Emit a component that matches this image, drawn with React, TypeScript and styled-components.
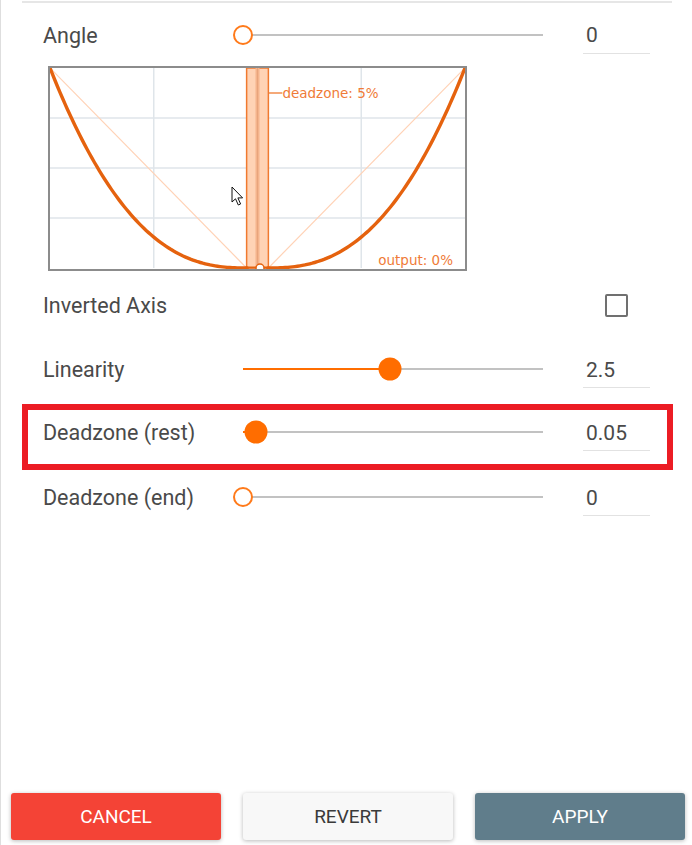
import React from 'react';
import styled, { createGlobalStyle, css } from 'styled-components';

const GlobalStyle = createGlobalStyle`
  html, body {
    margin: 0;
    padding: 0;
    background: #ffffff;
  }
  body {
    font-family: Roboto, "Noto Sans", "Liberation Sans", sans-serif;
    color: #424242;
  }
  * {
    box-sizing: border-box;
  }
`;

const ORANGE = '#ff6d00';
const CURVE = '#e5620e';
const LABEL_ORANGE = '#ef7b38';

const Panel = styled.div`
  width: 692px;
  height: 845px;
  border-left: 1px solid #dedede;
  display: flex;
  flex-direction: column;
`;

const TopRule = styled.div`
  margin: 1px 0 0 21px;
  width: 650px;
  border-top: 2px solid #e6e6e6;
`;

const Row = styled.div<{ height: number; inset?: number }>`
  height: ${p => p.height}px;
  padding-left: ${p => p.inset ?? 42}px;
  display: flex;
  align-items: center;
`;

const Label = styled.div`
  width: 200px;
  font-size: 21.5px;
  line-height: 26px;
  color: #4a4a4a;
  padding-top: 2px;
`;

const SliderBox = styled.div`
  position: relative;
  width: 300px;
  height: 24px;
`;

const Track = styled.div`
  position: absolute;
  left: 0;
  right: 0;
  top: 11px;
  height: 2px;
  background: #c2c2c2;
`;

const TrackFill = styled.div`
  position: absolute;
  left: 0;
  top: 11px;
  height: 2px;
  background: ${ORANGE};
`;

const Thumb = styled.div<{ hollow?: boolean }>`
  position: absolute;
  top: 50%;
  border-radius: 50%;
  transform: translate(-50%, -50%);
  ${p =>
    p.hollow
      ? css`
          width: 20px;
          height: 20px;
          background: #fff;
          border: 2px solid #ff7a1a;
        `
      : css`
          width: 23px;
          height: 23px;
          background: ${ORANGE};
        `}
`;

const ValueField = styled.div`
  margin-left: 40px;
  width: 67px;
  height: 38px;
  padding: 2px 0 0 3px;
  display: flex;
  align-items: center;
  font-size: 21px;
  color: #4a4a4a;
  border-bottom: 1px solid #e2e2e2;
`;

const ChartFrame = styled.div`
  margin-left: 47px;
  width: 419px;
  height: 205px;
  border: 2px solid #8c8c8c;
  background: #fff;
`;

const Checkbox = styled.div`
  margin-left: auto;
  margin-right: 64px;
  width: 23px;
  height: 23px;
  border: 2.5px solid #707070;
  border-radius: 2px;
`;

const Highlight = styled.div`
  margin: 5px 0 0 21px;
  width: 651px;
  height: 66px;
  border: 6px solid #ec1c24;
  padding-bottom: 10px;
`;

const Spacer = styled.div`
  flex: 1;
`;

const Footer = styled.div`
  display: flex;
  gap: 22px;
  padding: 0 0 5px 10px;
`;

type Variant = 'cancel' | 'revert' | 'apply';

const variantStyles: Record<Variant, ReturnType<typeof css>> = {
  cancel: css`
    background: #f44336;
    color: #ffffff;
  `,
  revert: css`
    background: #f8f8f8;
    color: #3a3a3a;
  `,
  apply: css`
    background: #607d8b;
    color: #ffffff;
  `,
};

const ActionButton = styled.button<{ variant: Variant }>`
  width: 210px;
  height: 47px;
  border: none;
  border-radius: 3px;
  font-family: Roboto, "Liberation Sans", sans-serif;
  font-size: 19px;
  font-weight: 400;
  box-shadow: 0 1px 4px rgba(0, 0, 0, 0.28);
  cursor: pointer;
  ${p => variantStyles[p.variant]}
`;

interface SliderProps {
  percent: number;
  hollow?: boolean;
}

const Slider: React.FC<SliderProps> = ({ percent, hollow }) => (
  <SliderBox>
    <Track />
    {percent > 0 && <TrackFill style={{ width: `${percent}%` }} />}
    <Thumb hollow={hollow} style={{ left: `${percent}%` }} />
  </SliderBox>
);

const W = 415;
const H = 200;
const DZ = 0.05;
const LIN = 2.5;
const CHART_FONT = "'DejaVu Sans', Verdana, sans-serif";

function curvePath(side: -1 | 1): string {
  const cx = W / 2;
  const pts: string[] = [];
  for (let i = 0; i <= 80; i++) {
    const u = DZ + ((1 - DZ) * i) / 80;
    const out = Math.pow((u - DZ) / (1 - DZ), LIN);
    const x = cx + side * u * cx;
    const y = H - out * H;
    pts.push(`${x.toFixed(2)},${y.toFixed(2)}`);
  }
  return 'M' + pts.join(' L');
}

const ResponseChart: React.FC = () => {
  const cx = W / 2;
  const half = DZ * cx * 2;
  const bandL = cx - half / 2 - 0.5;
  const bandR = cx + half / 2 + 0.5;
  return (
    <ChartFrame>
      <svg width={W} height={H + 1} viewBox={`0 0 ${W} ${H + 1}`} style={{ display: 'block' }}>
        {[1, 3].map(i => (
          <line key={`v${i}`} x1={(W / 4) * i} y1={0} x2={(W / 4) * i} y2={H} stroke="#dfe5ea" strokeWidth={1.5} />
        ))}
        {[1, 2, 3].map(i => (
          <line key={`h${i}`} x1={0} y1={(H / 4) * i} x2={W} y2={(H / 4) * i} stroke="#dfe5ea" strokeWidth={1.5} />
        ))}
        <line x1={0} y1={0} x2={bandL} y2={H} stroke="#ffd2b6" strokeWidth={1.2} />
        <line x1={bandR} y1={H} x2={W} y2={0} stroke="#ffd2b6" strokeWidth={1.2} />
        <rect x={bandL} y={0} width={bandR - bandL} height={H} fill="#ffd3b5" stroke="#f07a30" strokeWidth={1.5} />
        <rect x={cx - 2} y={0} width={4} height={H} fill="#f5b48c" />
        <line x1={cx} y1={0} x2={cx} y2={H} stroke="#e8a47c" strokeWidth={1} />
        <line x1={bandR} y1={25} x2={bandR + 14} y2={25} stroke="#f07a30" strokeWidth={1.3} />
        <text x={bandR + 14} y={30} fontFamily={CHART_FONT} fontSize={13.5} fill={LABEL_ORANGE}>
          deadzone: 5%
        </text>
        <text x={W - 12} y={197} textAnchor="end" fontFamily={CHART_FONT} fontSize={13.5} fill={LABEL_ORANGE}>
          output: 0%
        </text>
        <path d={curvePath(-1)} fill="none" stroke={CURVE} strokeWidth={3.4} strokeLinecap="round" />
        <path d={curvePath(1)} fill="none" stroke={CURVE} strokeWidth={3.4} strokeLinecap="round" />
        <line x1={bandL - 1} y1={H - 0.5} x2={bandR + 1} y2={H - 0.5} stroke={CURVE} strokeWidth={2} />
        <circle cx={cx + 2.5} cy={H} r={4} fill="#fff" stroke={CURVE} strokeWidth={1.5} />
        <path
          d="M182 119 L182 134 L185.5 130.8 L188.3 137 L190.6 136 L187.9 129.9 L192.6 129.9 Z"
          fill="#ffffff"
          stroke="#111"
          strokeWidth={1}
          strokeLinejoin="round"
        />
      </svg>
    </ChartFrame>
  );
};

const App: React.FC = () => (
  <>
    <GlobalStyle />
    <Panel>
      <TopRule />
      <Row height={63}>
        <Label>Angle</Label>
        <Slider percent={0} hollow />
        <ValueField>0</ValueField>
      </Row>
      <ResponseChart />
      <Row height={68}>
        <Label>Inverted Axis</Label>
        <Checkbox />
      </Row>
      <Row height={60}>
        <Label>Linearity</Label>
        <Slider percent={49} />
        <ValueField>2.5</ValueField>
      </Row>
      <Highlight>
        <Row height={44} inset={15}>
          <Label>Deadzone (rest)</Label>
          <Slider percent={4.4} />
          <ValueField>0.05</ValueField>
        </Row>
      </Highlight>
      <Row height={54}>
        <Label>Deadzone (end)</Label>
        <Slider percent={0} hollow />
        <ValueField>0</ValueField>
      </Row>
      <Spacer />
      <Footer>
        <ActionButton variant="cancel">CANCEL</ActionButton>
        <ActionButton variant="revert">REVERT</ActionButton>
        <ActionButton variant="apply">APPLY</ActionButton>
      </Footer>
    </Panel>
  </>
);

export default App;
